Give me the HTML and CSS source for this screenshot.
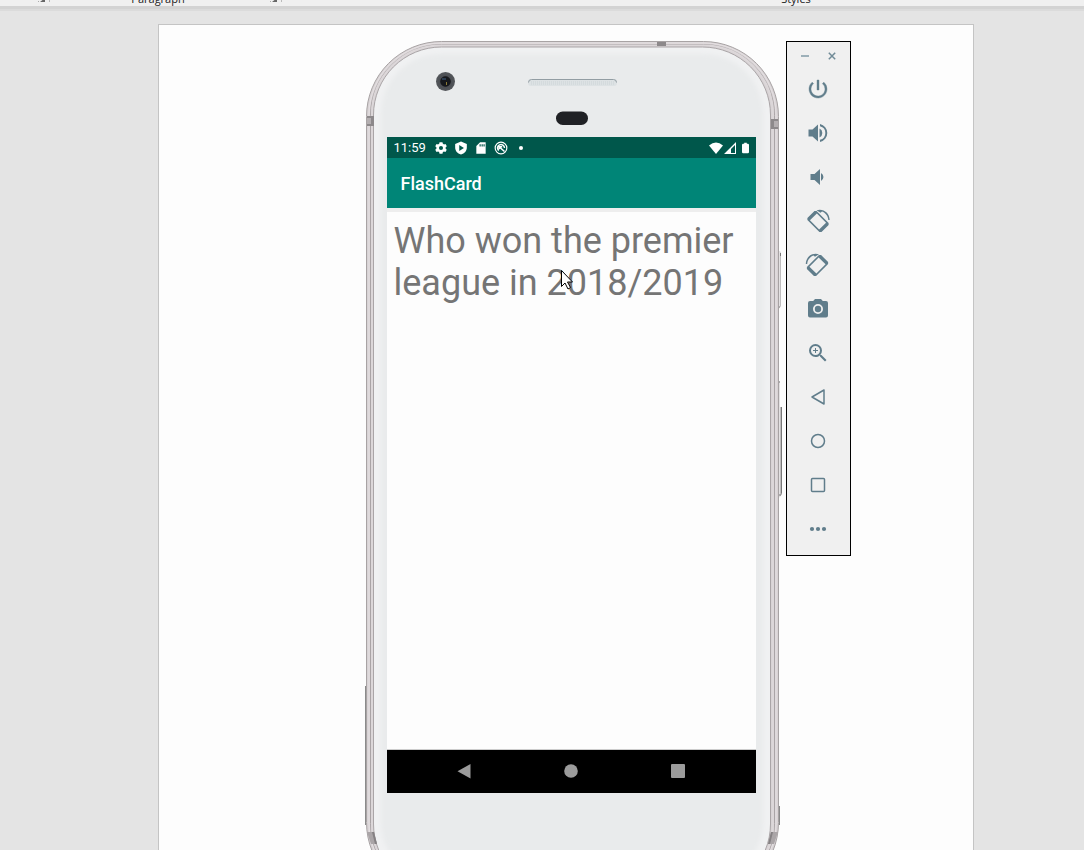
FILE: index.html
```html
<!DOCTYPE html>
<html lang="en">
<head>
<meta charset="utf-8">
<title>FlashCard</title>
<link rel="stylesheet" href="styles.css">
</head>
<body>
<header class="ribbon">
  <div class="group group-first"><svg class="launcher" viewBox="0 0 8 8"><path d="M0 1h1v2M3 6h5V2L3 6M1 5h1v1"/></svg></div>
  <div class="group group-paragraph"><span class="group-name">Paragraph</span><svg class="launcher" viewBox="0 0 8 8"><path d="M0 1h1v2M3 6h5V2L3 6M1 5h1v1"/></svg></div>
  <div class="group group-styles"><span class="group-name">Styles</span></div>
</header>
<main class="workspace">
  <div class="sheet">
    <div class="phone">
      <svg class="hardware" viewBox="366 41 413 857" aria-hidden="true">
        <defs>
          <linearGradient id="key" x1="0" x2="1"><stop offset="0" stop-color="#aaa"/><stop offset=".5" stop-color="#e4e2e3"/><stop offset="1" stop-color="#858585"/></linearGradient>
          <filter id="soft" x="-10%" y="-10%" width="120%" height="120%"><feGaussianBlur stdDeviation="2"/></filter>
          <radialGradient id="lens"><stop offset="0" stop-color="#15171b"/><stop offset=".5" stop-color="#26282c"/><stop offset=".6" stop-color="#4c4f54"/><stop offset="1" stop-color="#54575b"/></radialGradient>
        </defs>
        <path fill="url(#key)" d="M777 251h3l1 3v52l-2 3h-2zM777 381h3v26h2v87l-3 4h-2z"/>
        <path stroke="#777" d="M778 382h2M781.5 407v86M778 495h3M780.500 253v3M778 307h2"/>
        <path stroke="#8b8b8b" d="M365.500 686v139M779.500 806v19"/>
        <rect x="366.500" y="41.500" width="412" height="856" rx="75" fill="#d8d3d5" stroke="#a8a3a4"/>
        <rect x="369" y="43" width="407" height="852" rx="72" fill="none" stroke="#e5e0e2"/>
        <rect x="370.500" y="44.500" width="404" height="850" rx="71" fill="none" stroke="#aaa4a6"/>
        <rect x="372" y="45.500" width="401" height="847" rx="69" fill="none" stroke="#dcd7d9" stroke-width="2"/>
        <rect x="373.500" y="47" width="397" height="845" rx="68" fill="#f0f1f2" stroke="#aaa5a7"/>
        <rect x="381" y="54" width="382" height="828" rx="60" fill="#e9ebec" filter="url(#soft)"/>
        <path fill="#8d898b" d="M367 116h7v10h-7zM771 119h7v10h-7zM657 42h9v4h-9z"/>
        <path fill="#b4afb1" d="M367 118h4v6h-4zM774 121h4v6h-4z"/>
        <path fill="#aaa5a7" d="M367 832h7l3 12h-6zM778 832h-7l-3 12h6z"/>
        <path fill="#858183" d="M372 832h2l3 12h-2zM773 832h-2l-3 12h2z"/>
        <circle cx="445.500" cy="81.500" r="9.500" fill="url(#lens)"/>
        <circle cx="445.500" cy="81.500" r="5" fill="#16181c"/>
        <path fill="#2b3c50" d="M442 78h4v2h-4z"/><path fill="#8b7a35" d="M446 82h1v3h-1z"/>
        <rect x="528" y="79" width="89" height="7" rx="3" fill="#dde2e4"/>
        <path d="M528.500 82.500q0-3 3-3h82q3 0 3 3" fill="none" stroke="#929da3"/>
        <path d="M531 82h84M531 84h84" stroke="#cbd3d6" stroke-dasharray="1 1"/>
        <rect x="556" y="111.500" width="32" height="13.500" rx="6.750" fill="#202125"/>
      </svg>
      <section class="screen">
        <div class="status">
          <span class="clock">11:59</span>
          <svg class="status-icon" viewBox="0 0 24 24"><path fill-rule="evenodd" d="M20 13.200a8 8 0 0 0 0-2.400l2-1.700-2.300-4-2.600.9a8 8 0 0 0-1.900-1.100L14.500 2h-5l-.6 2.900A8 8 0 0 0 7 6l-2.600-.9-2.300 4 2 1.700a8 8 0 0 0 0 2.400l-2 1.700 2.300 4L7 18a8 8 0 0 0 1.900 1.100l.6 2.900h5l.6-2.900A8 8 0 0 0 17 18l2.600.9 2.300-4zM12 8.500a3.500 3.500 0 1 1 0 7 3.500 3.500 0 0 1 0-7z"/></svg>
          <svg class="status-icon" viewBox="0 0 24 24"><path fill-rule="evenodd" d="M12 1l10 4v6c0 5.500-4 10.500-10 12C6 21.500 2 16.500 2 11V5zM9 7v10l8-5z"/></svg>
          <svg class="status-icon" viewBox="0 0 24 24"><path fill-rule="evenodd" d="M20 2h-9.500L4 8.500V22h16zM9.500 5.500h2v4h-2zM13 5.500h2v4h-2zM16.300 5.500h2v4h-2z"/></svg>
          <svg class="status-icon" viewBox="0 0 24 24"><circle cx="12" cy="12" r="10" fill="none" stroke="#fff" stroke-width="2"/><path fill="none" stroke="#fff" stroke-width="2.500" d="M8 16.500A6 6 0 1 1 18 12M9 10l9 8M9 14v-4h5"/></svg>
          <svg class="status-icon" viewBox="0 0 24 24"><circle cx="12" cy="12" r="3.500"/></svg>
          <span class="signals">
            <svg class="wifi" viewBox="0 0 14 12"><path d="M0 3.500Q7-2.500 14 3.500L7 12z"/></svg>
            <svg class="cell" viewBox="0 0 12 12"><path fill-rule="evenodd" d="M0 12L12 0v12zM7 7v4h4V3z"/></svg>
            <svg class="battery" viewBox="0 0 8 12"><path d="M2.500 0h3v1H7l1 1v9l-1 1H1l-1-1V2l1-1h1.500z"/></svg>
          </span>
        </div>
        <h1 class="app-title">FlashCard</h1>
        <p class="question">Who won the premier league in 2018/2019</p>
        <nav class="nav">
          <button class="nav-button" aria-label="Back"><svg viewBox="0 0 14 14"><path d="M13.500 0v14.500L.5 7.200z"/></svg></button>
          <button class="nav-button" aria-label="Home"><svg viewBox="0 0 14 14"><circle cx="7" cy="7" r="6.800"/></svg></button>
          <button class="nav-button" aria-label="Overview"><svg viewBox="0 0 14 14"><rect width="14" height="14" rx="1"/></svg></button>
        </nav>
        <svg class="cursor" viewBox="0 0 12 20" aria-hidden="true"><path fill="#fff" stroke="#000" d="M.5.500v16l3.500-3.500 3 6 2.500-1.500-3-5.500h5z"/></svg>
      </section>
    </div>
    <aside class="tools">
      <div class="window-buttons">
        <button class="window-button" aria-label="Minimize"><svg viewBox="0 0 8 8"><path stroke="#9db0b9" stroke-width="2" d="M0 4h8"/></svg></button>
        <button class="window-button" aria-label="Close"><svg viewBox="0 0 8 8"><path stroke="#718b97" stroke-width="1.500" d="M.8.800l6.400 6.400M7.200.800L.8 7.200"/></svg></button>
      </div>
      <button class="tool" aria-label="Power"><svg viewBox="0 0 24 24"><path stroke="#607d8b" stroke-width=".4" d="M13 3h-2v10h2zm4.830 2.170l-1.420 1.420A6.920 6.920 0 0 1 19 12a7 7 0 1 1-11.420-5.420L6.170 5.170A9 9 0 1 0 21 12a8.940 8.940 0 0 0-3.170-6.830z"/></svg></button>
      <button class="tool" aria-label="Volume up"><svg viewBox="0 0 24 24"><path d="M2.500 8.500v7h4l5.500 5v-17l-5.500 5zM13.500 7.500v9a5 5 0 0 0 0-9zM14 3v2.200a7 7 0 0 1 0 13.600V21a9.200 9.200 0 0 0 0-18z"/></svg></button>
      <button class="tool" aria-label="Volume down"><svg viewBox="0 0 24 24"><path d="M4.500 9v6h4l5.500 5V4L8.500 9zM15 8v8a4.500 4.500 0 0 0 0-8z"/></svg></button>
      <button class="tool" aria-label="Rotate left"><svg viewBox="0 0 24 24"><path transform="translate(12 12.500) rotate(45)" fill-rule="evenodd" d="M-8.500-6.500h17l1.500 1.500v10l-1.500 1.500h-17l-1.500-1.500v-10zM-6.500-4.900v9.800H6.500v-9.800z"/><path d="M10.500 1.200C17-1 23.500 3.500 23.700 11h-1.400C22 7 19.500 3.800 16 2.600l-1.500 1.200z"/></svg></button>
      <button class="tool" aria-label="Rotate right"><svg viewBox="0 0 24 24"><g transform="matrix(-1 0 0 1 23.500 0)"><path transform="translate(12 12.500) rotate(45)" fill-rule="evenodd" d="M-8.500-6.500h17l1.500 1.500v10l-1.500 1.500h-17l-1.500-1.500v-10zM-6.500-4.900v9.800H6.500v-9.800z"/><path d="M10.500 1.200C17-1 23.500 3.500 23.700 11h-1.400C22 7 19.500 3.800 16 2.600l-1.500 1.200z"/></g></svg></button>
      <button class="tool" aria-label="Take screenshot"><svg viewBox="0 0 24 24"><circle cx="12" cy="12" r="3.200"/><path fill-rule="evenodd" d="M9 2L7.200 4H4a2 2 0 0 0-2 2v12.500a2 2 0 0 0 2 2h16a2 2 0 0 0 2-2V6a2 2 0 0 0-2-2h-3.200L15 2zM12 7a5 5 0 1 1 0 10 5 5 0 0 1 0-10z"/></svg></button>
      <button class="tool" aria-label="Zoom"><svg viewBox="0 0 24 24"><path d="M15.500 14h-.8l-.3-.3A6.470 6.470 0 0 0 16 9.500 6.500 6.500 0 1 0 9.500 16c1.600 0 3.100-.6 4.200-1.600l.3.300v.8l5 5 1.500-1.500zm-6 0a4.500 4.500 0 1 1 0-9 4.500 4.500 0 0 1 0 9zm2.500-4h-2v2H9v-2H7V9h2V7h1v2h2z"/></svg></button>
      <button class="tool tool-outline" aria-label="Back"><svg viewBox="0 0 24 24"><path d="M18 5v14L6 12z"/></svg></button>
      <button class="tool tool-outline" aria-label="Home"><svg viewBox="0 0 24 24"><circle cx="12" cy="12" r="6.500"/></svg></button>
      <button class="tool tool-outline" aria-label="Overview"><svg viewBox="0 0 24 24"><rect x="5.500" y="5.500" width="13" height="13" rx="1"/></svg></button>
      <button class="tool" aria-label="More"><svg viewBox="0 0 24 24"><circle cx="6" cy="12" r="2.100"/><circle cx="12" cy="12" r="2.100"/><circle cx="18" cy="12" r="2.100"/></svg></button>
    </aside>
  </div>
</main>
</body>
</html>
```
FILE: styles.css
```css
* { box-sizing: border-box; }
body {
  margin: 0;
  height: 100vh;
  display: flex;
  flex-direction: column;
  overflow: hidden;
  background: #e4e4e4;
  font-family: Roboto, sans-serif;
}
button { border: 0; padding: 0; background: none; display: flex; align-items: center; justify-content: center; }
svg { display: block; }

.ribbon {
  flex: none;
  display: flex;
  height: 6px;
  background: #f0f0f0;
  box-shadow: 0 3px #d3d3d3, 0 5px #dbdbdb;
}
.group {
  display: flex;
  align-items: flex-end;
  justify-content: center;
  position: relative;
  overflow: hidden;
}
.group-first { width: 50px; }
.group-paragraph { width: 232px; padding-right: 16px; }
.group-styles { flex: 1; padding-left: 226px; }
.group-name { font: 11px/14px "Open Sans", sans-serif; color: #222; }
.launcher {
  position: absolute;
  right: 5px;
  top: -4px;
  width: 8px;
  height: 8px;
  fill: #666;
}
.group-first::after, .group-paragraph::after {
  content: "";
  position: absolute;
  right: 0;
  top: 0;
  width: 1px;
  height: 2px;
  background: #bbb;
}

.workspace {
  flex: 1;
  min-height: 0;
  display: flex;
  justify-content: center;
  overflow: hidden;
  padding: 18px 0 0 48px;
}
.workspace::before { content: none; }
.sheet {
  width: 816px;
  display: flex;
  align-items: flex-start;
  justify-content: center;
  gap: 7px;
  padding: 16px 0 0 84px;
  background: #fdfdfd;
  border: 1px solid #c4c4c4;
  border-bottom: 0;
}

.phone {
  position: relative;
  width: 413px;
  padding: 96px 23px 105px 21px;
}
.hardware {
  position: absolute;
  inset: 0;
  width: 100%;
  height: 100%;
  overflow: visible;
}
.screen {
  position: relative;
  display: flex;
  flex-direction: column;
  background: #fdfdfd;
}
.status {
  display: flex;
  align-items: center;
  gap: 6px;
  height: 21px;
  padding: 0 7px;
  background: #00574b;
  color: #fff;
}
.clock { width: 34px; font-size: 13px; line-height: 21px; }
.status-icon { width: 14px; height: 14px; fill: #fff; }
.signals { display: flex; align-items: center; gap: 1px; margin-left: auto; fill: #fff; }
.wifi { width: 14px; height: 12px; }
.cell { width: 12px; height: 12px; }
.battery { width: 7px; height: 12px; margin-left: 5px; }
.app-title {
  margin: 0;
  padding: 1px 14px 0;
  background: #008577;
  color: #fff;
  font-size: 18px;
  font-weight: 500;
  line-height: 49px;
}
.question {
  margin: 0;
  min-height: 542px;
  padding: 8px 7px;
  border-top: 4px solid #eee;
  border-bottom: 1px solid #ccc;
  color: #757575;
  font-size: 36px;
  line-height: 42px;
}
.nav {
  display: flex;
  justify-content: center;
  gap: 93px;
  height: 43px;
  padding-bottom: 1px;
  background: #000;
}
.nav-button svg { width: 14px; height: 14px; fill: #9b9b9b; overflow: visible; }
.cursor { position: absolute; left: 174px; top: 133px; width: 12px; height: 20px; }

.tools {
  width: 65px;
  padding: 6px 0 4px;
  background: #f0f0f0;
  border: 1px solid #000;
}
.window-buttons { display: flex; justify-content: center; gap: 19px; padding-bottom: 3px; }
.window-button { height: 16px; }
.window-button svg { width: 8px; height: 8px; }
.tool { width: 100%; height: 44px; }
.tool svg { width: 24px; height: 24px; fill: #607d8b; overflow: visible; }
.tool-outline svg { fill: none; stroke: #607d8b; stroke-width: 1.5; stroke-linejoin: round; }
```
